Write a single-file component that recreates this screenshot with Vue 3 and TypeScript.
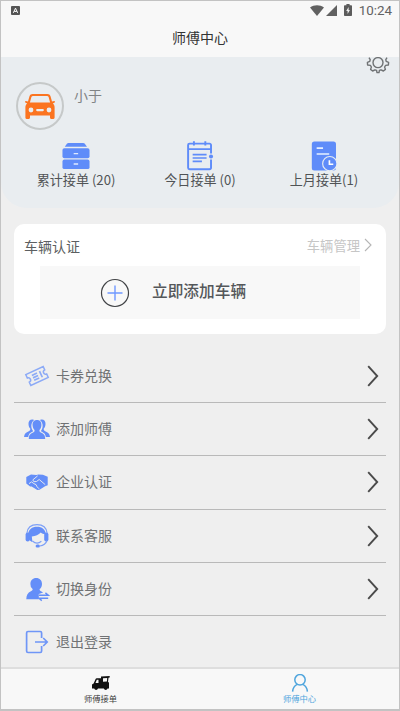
<script setup lang="ts">
interface Stat {
  icon: 'drawer' | 'note' | 'record'
  label: string
}

interface MenuItem {
  icon: 'ticket' | 'group' | 'shake' | 'service' | 'switch' | 'logout'
  label: string
  arrow: boolean
}

const stats: Stat[] = [
  { icon: 'drawer', label: '累计接单 (20)' },
  { icon: 'note', label: '今日接单 (0)' },
  { icon: 'record', label: '上月接单(1)' },
]

const menu: MenuItem[] = [
  { icon: 'ticket', label: '卡券兑换', arrow: true },
  { icon: 'group', label: '添加师傅', arrow: true },
  { icon: 'shake', label: '企业认证', arrow: true },
  { icon: 'service', label: '联系客服', arrow: true },
  { icon: 'switch', label: '切换身份', arrow: true },
  { icon: 'logout', label: '退出登录', arrow: false },
]
</script>

<template>
  <div class="screen">
    <header class="top">
      <div class="status">
        <svg class="app-mark" viewBox="0 0 10 10">
          <rect width="10" height="10" rx="1" fill="#555" />
          <path d="M2.6 7.6 5 2.4 7.4 7.6M3.6 6h2.8" fill="none" stroke="#fff" stroke-width="1.1" />
        </svg>
        <div class="signals">
          <svg class="wifi" viewBox="0 0 14 11"><path d="M0 2.6C4-.6 10-.6 14 2.6L7 11Z" fill="#616161" /></svg>
          <svg class="cell" viewBox="0 0 11 11"><path d="M11 0V11H0Z" fill="#616161" /></svg>
          <svg class="battery" viewBox="0 0 8 12">
            <path d="M2.4 0h3.2v1.2H7.2a.8.8 0 0 1 .8.8v9.2a.8.8 0 0 1-.8.8H.8a.8.8 0 0 1-.8-.8V2a.8.8 0 0 1 .8-.8h1.6Z" fill="#5c5c5c" />
            <path d="M4.6 3 2.200 7h1.400v3l2.300-4H4.600Z" fill="#f2f2f2" />
          </svg>
          <span class="time">10:24</span>
        </div>
      </div>
      <h1 class="title">师傅中心</h1>
    </header>

    <section class="profile">
      <svg class="gear" viewBox="0 0 24 17">
        <g fill="none" stroke="#6f7274" stroke-width="1.4" stroke-linejoin="round">
          <circle cx="12" cy="5.600" r="5" />
          <path d="M3 .6 4.200 2.600 3.800 4.400 1.400 5.400 1.600 8 4.400 8.400 5.400 10 4.600 12.400 6.600 14 9 12.800 10.600 13.400 11 15.600H13L13.400 13.400 15 12.800 17.400 14 19.400 12.400 18.600 10 19.600 8.400 22.400 8 22.600 5.400 20.200 4.400 19.800 2.600 21 .6" />
        </g>
      </svg>
      <div class="user">
        <div class="avatar">
          <svg class="car" viewBox="0 0 30 25">
            <path fill="#fb7420" fill-rule="evenodd" d="M7.600 0h14.800c1.600 0 2.600.8 3.100 2.200L27 7.400l2.200-.4c.9 0 1 1.400.2 1.800l-1.600.8c1.300 1 1.800 2.200 1.800 3.800v10.200c0 .8-.4 1.400-1.200 1.400h-2.200c-.8 0-1.200-.6-1.200-1.400v-2H5v2c0 .8-.4 1.400-1.200 1.400H1.600c-.8 0-1.200-.6-1.200-1.400V13.400c0-1.600.5-2.800 1.800-3.800L.6 8.800C-.2 8.400-.1 7 .8 7L3 7.400l1.500-5.200C5 .8 6 0 7.600 0ZM8 1.900c-.8 0-1.300.4-1.600 1.200L4.900 8.500h20.200l-1.500-5.400c-.3-.8-.8-1.200-1.600-1.200ZM6 13.600a2.400 2.400 0 1 0 0 4.800 2.400 2.400 0 0 0 0-4.800Zm18 0a2.400 2.400 0 1 0 0 4.800 2.400 2.400 0 0 0 0-4.800ZM12.200 15a1 1 0 0 0 0 2.200h5.600a1 1 0 0 0 0-2.200Z" />
          </svg>
        </div>
        <span class="name">小于</span>
      </div>
      <ul class="stats">
        <li v-for="s in stats" :key="s.label" class="stat">
          <svg v-if="s.icon === 'drawer'" class="stat-icon" viewBox="0 0 30 30">
            <g fill="#5f8cf9">
              <path d="M7.200 1h15.200c.8 0 1.300.3 1.700.8L26.400 5H3.400l2.200-3.200C6 1.300 6.400 1 7.200 1Z" />
              <rect x="1" y="6.400" width="28" height="10.400" rx="2" />
              <rect x="1" y="18.200" width="28" height="9.800" rx="2" />
            </g>
            <path d="M12.600 12h4.600M12.600 22.800h4.600" stroke="#dfe9ff" stroke-width="1.500" />
          </svg>
          <svg v-else-if="s.icon === 'note'" class="stat-icon" viewBox="0 0 30 30">
            <g fill="none" stroke="#5f8cf9" stroke-width="2">
              <path d="M26.400 12V3.200a1.500 1.500 0 0 0-1.500-1.500H4.200a1.500 1.500 0 0 0-1.500 1.500v23.400a1.500 1.500 0 0 0 1.500 1.500h20.700a1.500 1.500 0 0 0 1.500-1.500V18M8.700-.8v4.500M20.500-.8v4.500M3 7.400h23" />
              <path d="M7.400 13h14.400M7.400 16.600h14.400M7.400 20h9.600" stroke-width="1.700" />
            </g>
            <circle cx="26.400" cy="15" r="2.100" fill="#5f8cf9" />
          </svg>
          <svg v-else class="stat-icon" viewBox="0 0 30 30">
            <rect x="2.400" y="-.6" width="25" height="30" rx="2.600" fill="#5f8cf9" />
            <path d="M7.400 6.400h6.600M7.400 12.400h13" stroke="#e6efff" stroke-width="1.700" />
            <circle cx="21" cy="22.400" r="7.400" fill="#5f8cf9" stroke="#e8edf1" stroke-width="1.200" />
            <path d="M20.600 18.800v4.200h4" fill="none" stroke="#fff" stroke-width="1.700" />
          </svg>
          <span>{{ s.label }}</span>
        </li>
      </ul>
    </section>

    <section class="card">
      <div class="card-head">
        <span class="card-title">车辆认证</span>
        <span class="manage">
          车辆管理
          <svg viewBox="0 0 8 14"><path d="m1 1 6 6-6 6" fill="none" stroke="#b5b5b5" stroke-width="1.100" /></svg>
        </span>
      </div>
      <div class="add">
        <svg class="plus" viewBox="0 0 30 30">
          <circle cx="15" cy="15" r="13.500" fill="none" stroke="#414346" stroke-width="1.200" />
          <path d="M15 7.500v15M7.500 15h15" stroke="#6f98ff" stroke-width="1.400" />
        </svg>
        <span>立即添加车辆</span>
      </div>
    </section>

    <ul class="menu">
      <li v-for="m in menu" :key="m.label" class="row">
        <svg v-if="m.icon === 'ticket'" class="row-icon" viewBox="0 0 26 26">
          <g transform="rotate(-25 13 13)" fill="none" stroke="#8caaf6">
            <path d="M3.400 7h19.200v3.700a2.300 2.300 0 0 0 0 4.600V19H3.400v-3.700a2.300 2.300 0 0 0 0-4.600Z" stroke-width="1.500" />
            <path d="M8.600 10.300h5.600M8.600 13h5.600M8.600 15.700h5.600M17.300 9.600v6.800" stroke-width="1.700" />
          </g>
        </svg>
        <svg v-else-if="m.icon === 'group'" class="row-icon" viewBox="0 0 26 26">
          <g fill="#648ef8">
            <path d="M8.800 3.500C6 3.200 4.300 5 4.500 8c.1 2 .7 3.500 1.700 4.500.4 1.300-.2 2-1.400 2.700C2 16.500.4 17.500 0 21h4.200c.3-2.900 1.500-4.300 5-5.800-2.300-3.200-3-8 .9-11.300Z" />
            <path d="M17.200 3.500C20 3.200 21.700 5 21.500 8c-.1 2-.7 3.500-1.700 4.500-.4 1.300.2 2 1.400 2.700 2.800 1.300 4.400 2.300 4.800 5.800h-4.200c-.3-2.900-1.500-4.300-5-5.800 2.300-3.200 3-8-.9-11.300Z" />
            <path d="M13 4c3.100 0 4.700 2.200 4.400 5.400-.2 1.800-.7 3.400-1.900 4.500-.3 1.600.4 2.200 1.900 2.800 2.300 1 3.800 2.400 3.800 6.300H4.800c0-3.900 1.500-5.300 3.800-6.300 1.500-.6 2.200-1.200 1.900-2.800-1.200-1.100-1.700-2.700-1.900-4.500C8.300 6.200 9.900 4 13 4Z" />
          </g>
        </svg>
        <svg v-else-if="m.icon === 'shake'" class="row-icon" viewBox="0 0 26 26">
          <path fill="#648ef8" d="M2.300 8 7 5.600l5.300.4 2-.6 4.600.4 4.800 2v8.400l-2.600 1-5.600 3.500-2.200.4-5.700-3.500-1.500-.2-3.800-3Z" />
          <path d="m13.600 6.900-4.800 4 1 1.800 2.700-.2 2.700-2 6 5.100M5 14.600l2.600-1.700 2.200 1.700 2.200 1 1.100 2.200 2 2" fill="none" stroke="#efefef" stroke-width=".9" />
        </svg>
        <svg v-else-if="m.icon === 'service'" class="row-icon" viewBox="0 0 26 26">
          <g fill="#648ef8">
            <path d="M4.200 11C4.600 6.500 8 3.800 13 3.800s8.400 2.700 8.800 7.200c-2.300.1-3.600-.4-5-1.500-2.300 2.300-5 3.700-9 4.100l.6 5.300C5 18 3.700 15 4.200 11Z" />
            <rect x="1.600" y="9.500" width="4.200" height="9" rx="2" />
            <rect x="20.200" y="9.500" width="4.200" height="9" rx="2" />
            <rect x="11.600" y="21.600" width="4.300" height="3" rx="1.500" />
          </g>
          <path d="M2.900 10.200C3.500 4.800 7.200 1.700 13 1.700s9.500 3.100 10.100 8.500M23 17.500c-1 3-3.500 5.100-7.200 5.500M8.400 18c2.600 2.300 6.200 2.500 9 .3" fill="none" stroke="#7da0f7" stroke-width="1.200" />
        </svg>
        <svg v-else-if="m.icon === 'switch'" class="row-icon" viewBox="0 0 26 26">
          <path fill="#648ef8" d="M12.200 2c3.500 0 5.800 2.500 5.800 5.900 0 2.100-.9 3.900-2.300 5.200-.3 1 .2 1.600 1.300 2.200l2.100 1.300-4.300 1.500v5.100H2.300c0-4 1.500-6.400 4.600-7.900 1.200-.6 1.900-1.100 1.700-2.200a6.300 6.300 0 0 1-2.200-5.200C6.400 4.500 8.700 2 12.200 2Z" />
          <path d="M15 19.200h9.200l-2.800-2.300M24.200 22.300H15l2.800 2.300" fill="none" stroke="#648ef8" stroke-width="1.400" />
        </svg>
        <svg v-else class="row-icon" viewBox="0 0 26 26">
          <path d="M17.600 9V3.900a1.400 1.400 0 0 0-1.400-1.400H4a1.400 1.400 0 0 0-1.400 1.400v18.200A1.400 1.400 0 0 0 4 23.500h12.200a1.400 1.400 0 0 0 1.400-1.400V17M11 13h12M19.200 9l4 4-4 4" fill="none" stroke="#6f96f7" stroke-width="1.700" />
        </svg>
        <span class="row-label">{{ m.label }}</span>
        <svg v-if="m.arrow" class="arrow" viewBox="0 0 12 22">
          <path d="m1.200 1.200 9 9.800-9 9.800" fill="none" stroke="#4a4a4a" stroke-width="1.900" />
        </svg>
      </li>
    </ul>

    <nav class="tabs">
      <a class="tab">
        <svg class="tab-icon" viewBox="0 0 20 18">
          <path fill="#111" fill-rule="evenodd" d="M1 14.500v-4l1.600-1 2-4.500c.2-.6.600-.8 1.200-.8H10V2.600l8.700-.5v1.300l-1.200.4-.5 3.900 1 1v5.800h-1.400a2 2 0 0 1-3.800 0H7a2 2 0 0 1-3.800 0ZM5.800 5.800 4.500 9h3V5.800ZM12 4.300v3.500l3.900-.3.300-3.400Z" />
        </svg>
        <span>师傅接单</span>
      </a>
      <a class="tab active">
        <svg class="tab-icon" viewBox="0 0 20 18">
          <g fill="none" stroke="#4fa5dd" stroke-width="1.500">
            <circle cx="10" cy="5.800" r="5.200" />
            <path d="M2.600 17.600c.3-3.600 1.900-6 4.700-7.200M17.400 17.600c-.3-3.600-1.900-6-4.700-7.200" />
          </g>
        </svg>
        <span>师傅中心</span>
      </a>
    </nav>
  </div>
</template>

<style>
body {
  margin: 0;
  overflow: hidden;
}
</style>

<style scoped>
* {
  box-sizing: border-box;
}

ul {
  margin: 0;
  padding: 0;
  list-style: none;
}

svg {
  display: block;
  flex: none;
}

.screen {
  display: flex;
  flex-direction: column;
  width: 400px;
  height: 711px;
  border: 1px solid #c3c3c3;
  border-bottom-width: 2px;
  background: #efefef;
  color: #5c5f61;
  font-family: 'Noto Sans CJK SC', 'Noto Sans', sans-serif;
  font-size: 14px;
  line-height: 20px;
}

.top {
  height: 56px;
  flex: none;
  background: #f8f8f8;
}

.status {
  display: flex;
  justify-content: space-between;
  align-items: center;
  height: 18px;
  padding: 0 7px 0 10px;
}

.app-mark {
  width: 9px;
  height: 9px;
}

.signals {
  display: flex;
  align-items: center;
}

.wifi {
  width: 14px;
  height: 11px;
}

.cell {
  width: 11px;
  height: 11px;
  margin-left: 2px;
}

.battery {
  width: 8px;
  height: 12px;
  margin: 0 7px;
}

.time {
  padding-top: 1px;
  color: #626262;
  font-family: Roboto, sans-serif;
  font-size: 13.4px;
}

.title {
  margin: 7px 0 0;
  color: #333;
  font-size: 14px;
  font-weight: 400;
  line-height: 22px;
  text-align: center;
}

.profile {
  position: relative;
  height: 151px;
  flex: none;
  padding-top: 25px;
  border-radius: 0 0 26px 26px;
  background: #e9edf0;
}

.gear {
  position: absolute;
  top: 0;
  right: 9px;
  width: 24px;
  height: 17px;
}

.user {
  display: flex;
  height: 48px;
  padding-left: 15px;
}

.avatar {
  display: flex;
  align-items: center;
  justify-content: center;
  width: 48px;
  height: 48px;
  border: 2px solid #c6c9c9;
  border-radius: 50%;
}

.car {
  width: 30px;
  height: 25px;
}

.name {
  margin: 3px 0 0 10px;
  color: #818486;
}

.stats {
  display: grid;
  grid-template-columns: repeat(3, 1fr);
  padding: 12px 13px 0;
}

.stat {
  display: flex;
  flex-direction: column;
  align-items: center;
  color: #505355;
  font-size: 13.100px;
  line-height: 20px;
}

.stat-icon {
  width: 30px;
  height: 29px;
  margin-bottom: -1px;
  overflow: visible;
}

.card {
  height: 110px;
  flex: none;
  margin: 16px 13px 0;
  padding: 12px 11px 0 10px;
  border-radius: 10px;
  background: #fff;
}

.card-head {
  display: flex;
  justify-content: space-between;
  height: 20px;
}

.manage {
  display: flex;
  align-items: center;
  gap: 4px;
  margin-right: 3px;
  color: #c6c6c6;
  font-size: 13.300px;
}

.manage svg {
  width: 8px;
  height: 14px;
  margin-top: -3px;
}

.add {
  display: flex;
  align-items: center;
  height: 53px;
  margin: 10px 15px 0 16px;
  padding: 0 0 2px 60px;
  background: #f8f8f8;
  color: #54575a;
  font-size: 15.700px;
  font-weight: 500;
}

.add span {
  margin-top: -1px;
}

.plus {
  width: 30px;
  height: 30px;
  margin: 3px 22px 0 0;
}

.menu {
  flex: 1;
  min-height: 0;
  margin: 16px 13px 0;
}

.row {
  display: flex;
  align-items: center;
  height: 53.200px;
  padding: 0 7px 0 10px;
  border-bottom: 1px solid #b9b9b9;
}

.row:last-child {
  height: 52px;
  border-bottom: 0;
}

.row-icon {
  width: 26px;
  height: 26px;
}

.row-label {
  margin: -2px auto 0 6px;
  color: #707274;
}

.arrow {
  width: 12px;
  height: 22px;
}

.tabs {
  display: flex;
  height: 42px;
  flex: none;
  border-top: 2px solid #dedede;
  background: #f8f8f8;
}

.tab {
  display: flex;
  flex: 1;
  flex-direction: column;
  align-items: center;
  padding-top: 5px;
  color: #3d3d3d;
  font-size: 8.300px;
  line-height: 12px;
}

.tab.active {
  color: #4fa5dd;
}

.tab-icon {
  width: 20px;
  height: 18px;
}
</style>
